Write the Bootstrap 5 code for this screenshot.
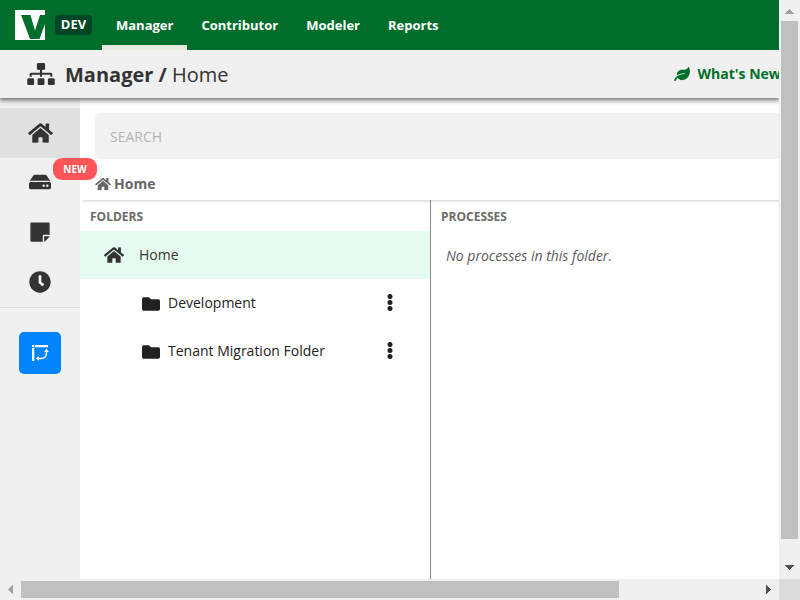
<!DOCTYPE html>
<html lang="en">
<head>
<meta charset="utf-8">
<meta name="viewport" content="width=device-width, initial-scale=1">
<title>Manager / Home</title>
<link href="https://cdn.jsdelivr.net/npm/bootstrap@5.3.0/dist/css/bootstrap.min.css" rel="stylesheet">
<style>
  body { font-family: "Open Sans", sans-serif; font-size: 14px; line-height: 20px; color: #333; }
  svg { display: block; flex: none; }
  svg:not([fill]) { fill: currentColor; }
  .window { display: grid; grid-template: 579px 21px / 779px 21px; width: 800px; height: 600px; }
  .topbar { height: 50px; background: #006e2b; padding-left: 15px; z-index: 3; }
  .env-tag { background: #004526; font-size: 13px; line-height: 18px; width: 37px; height: 20px; margin: 0 10px; border-radius: 4px; }
  .topbar .nav-link { color: #fff; font-size: 13px; font-weight: 700; line-height: 20px; height: 50px; padding: 15px 14px 0; }
  .topbar .nav-link.active { border-bottom: 5px solid #e8e8e1; }
  .titlebar { height: 48px; background: #f0f0f0; padding-left: 27px; box-shadow: 0 1px 5px 1px rgba(0,0,0,.6); z-index: 2; }
  .page-title { font-size: 20px; line-height: 28px; margin: 2px 0 0 10px; }
  .news { color: #006e2b; margin-left: 445px; }
  .rail { width: 80px; background: #f0f0f0; padding-top: 10px; }
  .rail-item { height: 50px; width: 80px; padding-bottom: 2px; }
  .rail-item.active { background: #e0e0e0; padding-bottom: 1px; }
  .rail-group { border-bottom: 1px solid #ddd; height: 200px; }
  .new-tag { left: 53px; top: 0; width: 44px; height: 22px; border-radius: 9px; background: #ff5558; font-size: 10px; z-index: 3; }
  .action { width: 42px; height: 42px; border-radius: 5px; background: #0084ff; margin: 24px 0 0 19px; }
  .search { height: 46px; margin: 15px 0 0 15px; padding: 2px 0 0 15px; background: #f1f1f1; color: #b5b5b5; border-radius: 5px 0 0 5px; }
  .crumbs { height: 41px; padding: 9px 0 0 15px; gap: 3px; color: #666; box-shadow: 3px 1px 3px rgba(0,0,0,.2); clip-path: inset(0 0 -5px 0); }
  .folders { width: 351px; border-right: 1px solid #888; }
  .heading { font-size: 12px; font-weight: 700; line-height: 16px; height: 31px; padding: 9px 0 0 10px; margin: 0; color: #6c6c68; }
  .tree-row { height: 48px; }
  .tree-row.active { background: #e6fcf0; padding-left: 24px; gap: 15px; }
  .tree-child { padding: 0 37px 0 62px; gap: 8px; color: #212121; }
  .empty-note { color: #5c5c5c; padding: 15px 0 0 15px; }
  .track { background: #f0f0f0; }
  .thumb { background: #c0c0c0; }
</style>
<script src="https://cdn.jsdelivr.net/npm/bootstrap@5.3.0/dist/js/bootstrap.bundle.min.js"></script>
</head>
<body class="overflow-hidden">
<svg width="0" height="0" class="position-absolute" aria-hidden="true">
  <symbol id="i-home" viewBox="0 0 576 512"><path d="M280.37 148.26L96 300.11V464a16 16 0 0 0 16 16l112.06-.29a16 16 0 0 0 15.92-16V368a16 16 0 0 1 16-16h64a16 16 0 0 1 16 16v95.64a16 16 0 0 0 16 16.05L464 480a16 16 0 0 0 16-16V300L295.67 148.26a12.19 12.19 0 0 0-15.3 0zM571.6 251.47L488 182.56V44.05a12 12 0 0 0-12-12h-56a12 12 0 0 0-12 12v72.61L318.47 43a48 48 0 0 0-61 0L4.34 251.47a12 12 0 0 0-1.6 16.9l25.5 31A12 12 0 0 0 45.15 301l235.22-193.74a12.19 12.19 0 0 1 15.3 0L530.9 301a12 12 0 0 0 16.9-1.6l25.5-31a12 12 0 0 0-1.7-16.93z"/></symbol>
  <symbol id="i-folder" viewBox="0 0 18 18"><path d="M1.700 3.300h5.300l2 2h7.300q1.700 0 1.700 1.700v8q0 1.700-1.700 1.700H1.700Q0 16.700 0 15V5q0-1.700 1.700-1.700z"/></symbol>
  <symbol id="i-dots" viewBox="0 0 6 18"><circle cx="3" cy="2.500" r="2.500"/><circle cx="3" cy="8.500" r="2.500"/><circle cx="3" cy="14.500" r="2.500"/></symbol>
</svg>
<div class="window">
  <div class="d-flex flex-column overflow-hidden bg-white">
    <header class="topbar d-flex align-items-center flex-shrink-0 position-relative">
      <svg width="30" height="30" viewBox="0 0 30 30"><path fill="#fff" d="M0 0h30v30H0z"/><path fill="#006e2b" d="M6 5h9.500l4.500 15.500L25 5h5v9l-5.500 15H15z"/></svg>
      <span class="env-tag text-white fw-bold text-center">DEV</span>
      <nav class="nav">
        <a class="nav-link active" href="#">Manager</a>
        <a class="nav-link" href="#">Contributor</a>
        <a class="nav-link" href="#">Modeler</a>
        <a class="nav-link" href="#">Reports</a>
      </nav>
    </header>
    <div class="titlebar d-flex align-items-center flex-shrink-0 position-relative">
      <svg width="28" height="22" viewBox="0 0 640 512"><path d="M128 352H32c-17.67 0-32 14.33-32 32v96c0 17.67 14.33 32 32 32h96c17.67 0 32-14.33 32-32v-96c0-17.67-14.33-32-32-32zm-24-80h192v48h48v-48h192v48h48v-57.59c0-21.17-17.23-38.41-38.41-38.41H344v-64h40c17.67 0 32-14.33 32-32V32c0-17.67-14.33-32-32-32H256c-17.67 0-32 14.33-32 32v96c0 17.67 14.33 32 32 32h40v64H94.41C73.23 224 56 241.23 56 262.41V320h48v-48zm264 80h-96c-17.67 0-32 14.33-32 32v96c0 17.67 14.33 32 32 32h96c17.67 0 32-14.33 32-32v-96c0-17.67-14.33-32-32-32zm240 0h-96c-17.67 0-32 14.33-32 32v96c0 17.67 14.33 32 32 32h96c17.67 0 32-14.33 32-32v-96c0-17.67-14.33-32-32-32z"/></svg>
      <h1 class="page-title fw-bold text-nowrap">Manager / <span class="fw-normal">Home</span></h1>
      <a href="#" class="news d-flex align-items-center gap-2 fw-bold text-nowrap text-decoration-none"><svg width="16" height="14" viewBox="0 0 576 512"><path d="M546.2 9.7c-5.6-12.5-21.6-13-28.3-1.2C486.9 62.4 431.4 96 368 96h-80C182 96 96 182 96 288c0 7 .8 13.7 1.5 20.5C161.3 262.8 253.4 224 384 224c8.8 0 16 7.2 16 16s-7.2 16-16 16C132.6 256 26 410.1 2.4 468c-6.6 16.3 1.2 34.9 17.5 41.6 16.4 6.8 35-1.1 41.8-17.3 1.5-3.6 20.9-47.9 71.9-90.6 32.4 43.9 94 85.8 174.9 77.2C465.5 467.5 576 326.7 576 154.3c0-50.2-10.8-102.2-29.8-144.6z"/></svg>What's New</a>
    </div>
    <div class="d-flex flex-grow-1">
      <aside class="rail flex-shrink-0">
        <div class="rail-group">
          <div class="rail-item active d-flex align-items-center justify-content-center"><svg width="25" height="22"><use href="#i-home"/></svg></div>
          <div class="rail-item d-flex align-items-center justify-content-center position-relative"><svg width="22" height="20" viewBox="0 0 576 512"><path d="M576 304v96c0 26.51-21.49 48-48 48H48c-26.51 0-48-21.49-48-48v-96c0-26.51 21.49-48 48-48h480c26.51 0 48 21.49 48 48zm-48-80a79.557 79.557 0 0 1 30.777 6.165L462.25 85.374A48.003 48.003 0 0 0 422.311 64H153.689a48 48 0 0 0-39.938 21.374L17.223 230.165A79.557 79.557 0 0 1 48 224h480zm-48 96c-17.673 0-32 14.327-32 32s14.327 32 32 32 32-14.327 32-32-14.327-32-32-32zm-96 0c-17.673 0-32 14.327-32 32s14.327 32 32 32 32-14.327 32-32-14.327-32-32-32z"/></svg>
            <span class="new-tag position-absolute d-flex align-items-center justify-content-center text-white fw-bold">NEW</span></div>
          <div class="rail-item d-flex align-items-center justify-content-center"><svg width="20" height="22" viewBox="0 0 448 512"><path d="M312 320h136V56c0-13.3-10.7-24-24-24H24C10.7 32 0 42.7 0 56v400c0 13.3 10.7 24 24 24h264V344c0-13.2 10.8-24 24-24zm129 55l-98 98c-4.5 4.5-10.6 7-17 7h-6V352h128v6.1c0 6.3-2.5 12.4-7 16.9z"/></svg></div>
          <div class="rail-item d-flex align-items-center justify-content-center"><svg width="22" height="22" viewBox="0 0 512 512"><path d="M256,8C119,8,8,119,8,256S119,504,256,504,504,393,504,256,393,8,256,8Zm92.49,313h0l-20,25a16,16,0,0,1-22.49,2.5h0l-67-49.72a40,40,0,0,1-15-31.23V112a16,16,0,0,1,16-16h32a16,16,0,0,1,16,16V256l58,42.5A16,16,0,0,1,348.49,321Z"/></svg></div>
        </div>
        <a href="#" class="action d-flex align-items-center justify-content-center text-white"><svg width="18" height="18" viewBox="0 0 18 18"><path d="M1 1h2.300v2.300H1zM4 1h13v2.300H4zM1 4h2.300v13H1zM15.500 4.500l2.300 3.500h-4.600zM4.800 14.500l3.200-2.300v4.600z"/><path fill="none" stroke="#fff" stroke-width="1.500" d="M15.500 7v2.500q-.5 4.500-5 5H7"/></svg></a>
      </aside>
      <main class="d-flex flex-column flex-grow-1">
        <div class="search d-flex align-items-center flex-shrink-0">SEARCH</div>
        <div class="crumbs d-flex align-items-center flex-shrink-0 fw-bold"><svg width="16" height="14"><use href="#i-home"/></svg>Home</div>
        <div class="d-flex flex-grow-1">
          <section class="folders flex-shrink-0">
            <h2 class="heading">FOLDERS</h2>
            <div class="tree-row active d-flex align-items-center"><svg width="20" height="18"><use href="#i-home"/></svg>Home</div>
            <div class="tree-row tree-child d-flex align-items-center"><svg width="18" height="18"><use href="#i-folder"/></svg><span class="flex-grow-1">Development</span><svg width="6" height="18"><use href="#i-dots"/></svg></div>
            <div class="tree-row tree-child d-flex align-items-center"><svg width="18" height="18"><use href="#i-folder"/></svg><span class="flex-grow-1">Tenant Migration Folder</span><svg width="6" height="18"><use href="#i-dots"/></svg></div>
          </section>
          <section class="flex-grow-1">
            <h2 class="heading">PROCESSES</h2>
            <p class="empty-note fst-italic mb-0">No processes in this folder.</p>
          </section>
        </div>
      </main>
    </div>
  </div>
  <div class="track d-flex flex-column align-items-center">
    <svg width="21" height="21" viewBox="0 0 21 21" fill="#a3a3a3" shape-rendering="crispEdges"><path d="M6 14h9l-4.500-5z"/></svg>
    <div class="thumb" style="width:17px;height:518px"></div>
    <svg class="mt-auto" width="21" height="21" viewBox="0 0 21 21" fill="#505050" shape-rendering="crispEdges"><path d="M6 7h9l-4.500 5z"/></svg>
  </div>
  <div class="track d-flex align-items-center">
    <svg width="21" height="21" viewBox="0 0 21 21" fill="#a3a3a3" shape-rendering="crispEdges"><path d="M13 6v9l-5-4.500z"/></svg>
    <div class="thumb" style="width:598px;height:17px"></div>
    <svg class="ms-auto" width="21" height="21" viewBox="0 0 21 21" fill="#505050" shape-rendering="crispEdges"><path d="M8 6v9l5-4.500z"/></svg>
  </div>
  <div style="background:#dcdcdc"></div>
</div>
</body>
</html>
